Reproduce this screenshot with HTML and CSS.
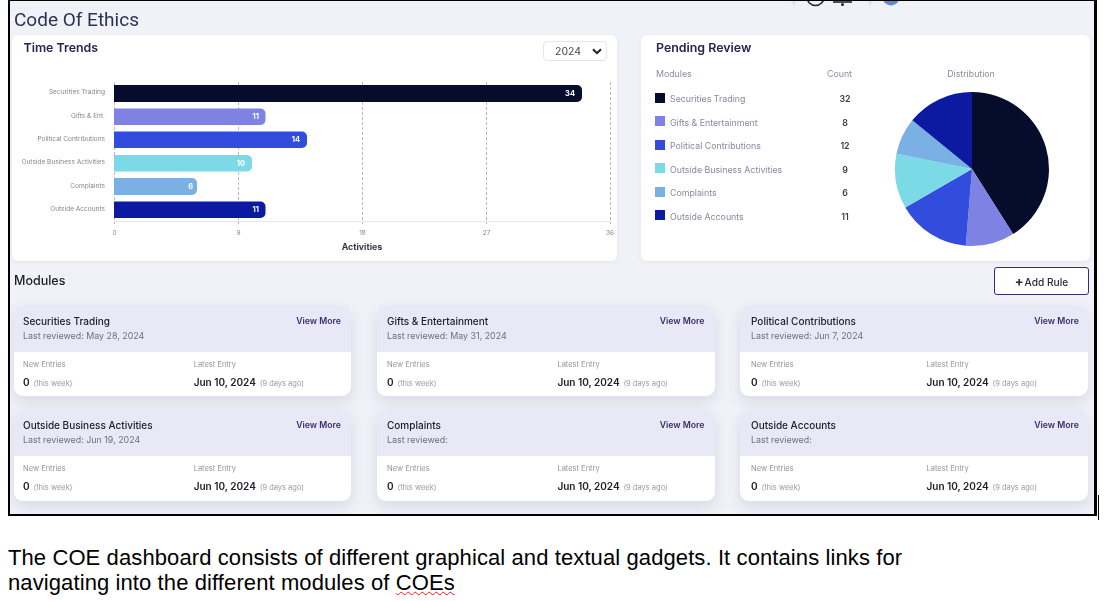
FILE: index.html
```html
<!DOCTYPE html>
<html lang="en">
<head>
    <meta charset="UTF-8">
    <title>Code Of Ethics</title>
    <link rel="stylesheet" href="styles.css">
</head>
<body>
    <div class="frame">
        <div class="screen">
            <div class="topbar">
                <svg width="110" height="6" viewBox="0 0 110 6">
                    <path d="M4 0V4M80 0V4" stroke="#c9c9d2" stroke-width="1"/>
                    <circle cx="25.5" cy="-4" r="8.5" fill="none" stroke="#23232b" stroke-width="1.6"/>
                    <path d="M43 1H62" stroke="#23232b" stroke-width="1.6"/>
                    <circle cx="52.5" cy="3.5" r="1.5" fill="#23232b"/>
                    <circle cx="101" cy="-4" r="8.5" fill="#5b8bd0"/>
                </svg>
            </div>
            <h1 class="page-title">Code Of Ethics</h1>

            <div class="top-row">
                <section class="card trends">
                    <div class="trends-head">
                        <h2 class="card-title">Time Trends</h2>
                        <div class="year-select">
                            2024
                            <svg width="10" height="7" viewBox="0 0 10 7"><path d="M1 1.2L5 5.2L9 1.2" fill="none" stroke="#1f1f2b" stroke-width="2"/></svg>
                        </div>
                    </div>
                    <svg class="bar-chart" width="605" height="186" viewBox="12 75 605 186">
                        <g class="grid-lines">
                            <path d="M114.5 82V224M238.5 82V224M362.5 82V224M486.5 82V224M610.5 82V224"/>
                        </g>
                        <path d="M114 221.5H611" stroke="#e6e6ec" stroke-width="1"/>

                        <path d="M114 85H577a5 5 0 0 1 5 5v7a5 5 0 0 1 -5 5H114Z" fill="#060c2c"/>
                        <path d="M114 108.5H260.500a5 5 0 0 1 5 5v6.500a5 5 0 0 1 -5 5H114Z" fill="#7e83e3"/>
                        <path d="M114 131.500H302a5 5 0 0 1 5 5v6.500a5 5 0 0 1 -5 5H114Z" fill="#324cdd"/>
                        <path d="M114 155H247a5 5 0 0 1 5 5v6.500a5 5 0 0 1 -5 5H114Z" fill="#7cd9e6"/>
                        <path d="M114 178H192a5 5 0 0 1 5 5v7a5 5 0 0 1 -5 5H114Z" fill="#7ab0e3"/>
                        <path d="M114 201.500H260.500a5 5 0 0 1 5 5v6.500a5 5 0 0 1 -5 5H114Z" fill="#0b1aa0"/>

                        <g class="bar-labels">
                            <text x="105" y="94">Securities Trading</text>
                            <text x="105" y="118">Gifts &amp; Ent.</text>
                            <text x="105" y="141">Political Contributions</text>
                            <text x="105" y="164">Outside Business Activities</text>
                            <text x="105" y="188">Complaints</text>
                            <text x="105" y="211">Outside Accounts</text>
                        </g>
                        <g class="bar-values">
                            <text x="575" y="96">34</text>
                            <text x="259" y="119">11</text>
                            <text x="300" y="142">14</text>
                            <text x="245" y="165.500">10</text>
                            <text x="193" y="189">6</text>
                            <text x="259" y="212">11</text>
                        </g>
                        <g class="axis-labels">
                            <text x="114.500" y="235">0</text>
                            <text x="238.500" y="235">9</text>
                            <text x="362.500" y="235">18</text>
                            <text x="486.500" y="235">27</text>
                            <text x="610" y="235">36</text>
                        </g>
                        <text class="axis-title" x="362" y="250">Activities</text>
                    </svg>
                </section>

                <section class="card pending">
                    <div class="pending-list">
                        <h2 class="card-title">Pending Review</h2>
                        <div class="pending-cols"><span>Modules</span><span>Count</span></div>
                        <div class="pending-row"><i class="swatch c1"></i><span class="pending-name">Securities Trading</span><b>32</b></div>
                        <div class="pending-row"><i class="swatch c2"></i><span class="pending-name">Gifts &amp; Entertainment</span><b>8</b></div>
                        <div class="pending-row"><i class="swatch c3"></i><span class="pending-name">Political Contributions</span><b>12</b></div>
                        <div class="pending-row"><i class="swatch c4"></i><span class="pending-name">Outside Business Activities</span><b>9</b></div>
                        <div class="pending-row"><i class="swatch c5"></i><span class="pending-name">Complaints</span><b>6</b></div>
                        <div class="pending-row"><i class="swatch c6"></i><span class="pending-name">Outside Accounts</span><b>11</b></div>
                    </div>
                    <div class="pending-pie">
                        <div class="pie-label">Distribution</div>
                        <svg width="156" height="156" viewBox="-78 -78 156 156">
                            <path d="M0 0V-77A77 77 0 0 1 41.100 65.100Z" fill="#060c2c"/>
                            <path d="M0 0L41.100 65.100A77 77 0 0 1 -6.200 76.800Z" fill="#7e83e3"/>
                            <path d="M0 0L-6.200 76.800A77 77 0 0 1 -66.700 38.500Z" fill="#324cdd"/>
                            <path d="M0 0L-66.700 38.500A77 77 0 0 1 -75.500 -15.300Z" fill="#7cd9e6"/>
                            <path d="M0 0L-75.500 -15.300A77 77 0 0 1 -59.700 -48.700Z" fill="#7ab0e3"/>
                            <path d="M0 0L-59.700 -48.700A77 77 0 0 1 0 -77Z" fill="#0b1aa0"/>
                        </svg>
                    </div>
                </section>
            </div>

            <div class="modules-head">
                <h2 class="modules-title">Modules</h2>
                <button class="add-rule"><span class="plus">+</span>Add Rule</button>
            </div>

            <div class="modules">
                <div class="module">
                    <div class="module-head">
                        <div><div class="module-name">Securities Trading</div><div class="module-date">Last reviewed: May 28, 2024</div></div>
                        <a class="view-more">View More</a>
                    </div>
                    <div class="module-body">
                        <div class="col-new"><div class="stat-label">New Entries</div><div class="stat"><b>0</b> <small>(this week)</small></div></div>
                        <div><div class="stat-label">Latest Entry</div><div class="stat"><b>Jun 10, 2024</b> <small>(9 days ago)</small></div></div>
                    </div>
                </div>
                <div class="module">
                    <div class="module-head">
                        <div><div class="module-name">Gifts &amp; Entertainment</div><div class="module-date">Last reviewed: May 31, 2024</div></div>
                        <a class="view-more">View More</a>
                    </div>
                    <div class="module-body">
                        <div class="col-new"><div class="stat-label">New Entries</div><div class="stat"><b>0</b> <small>(this week)</small></div></div>
                        <div><div class="stat-label">Latest Entry</div><div class="stat"><b>Jun 10, 2024</b> <small>(9 days ago)</small></div></div>
                    </div>
                </div>
                <div class="module">
                    <div class="module-head">
                        <div><div class="module-name">Political Contributions</div><div class="module-date">Last reviewed: Jun 7, 2024</div></div>
                        <a class="view-more">View More</a>
                    </div>
                    <div class="module-body">
                        <div class="col-new"><div class="stat-label">New Entries</div><div class="stat"><b>0</b> <small>(this week)</small></div></div>
                        <div><div class="stat-label">Latest Entry</div><div class="stat"><b>Jun 10, 2024</b> <small>(9 days ago)</small></div></div>
                    </div>
                </div>
                <div class="module">
                    <div class="module-head">
                        <div><div class="module-name">Outside Business Activities</div><div class="module-date">Last reviewed: Jun 19, 2024</div></div>
                        <a class="view-more">View More</a>
                    </div>
                    <div class="module-body">
                        <div class="col-new"><div class="stat-label">New Entries</div><div class="stat"><b>0</b> <small>(this week)</small></div></div>
                        <div><div class="stat-label">Latest Entry</div><div class="stat"><b>Jun 10, 2024</b> <small>(9 days ago)</small></div></div>
                    </div>
                </div>
                <div class="module">
                    <div class="module-head">
                        <div><div class="module-name">Complaints</div><div class="module-date">Last reviewed:</div></div>
                        <a class="view-more">View More</a>
                    </div>
                    <div class="module-body">
                        <div class="col-new"><div class="stat-label">New Entries</div><div class="stat"><b>0</b> <small>(this week)</small></div></div>
                        <div><div class="stat-label">Latest Entry</div><div class="stat"><b>Jun 10, 2024</b> <small>(9 days ago)</small></div></div>
                    </div>
                </div>
                <div class="module">
                    <div class="module-head">
                        <div><div class="module-name">Outside Accounts</div><div class="module-date">Last reviewed:</div></div>
                        <a class="view-more">View More</a>
                    </div>
                    <div class="module-body">
                        <div class="col-new"><div class="stat-label">New Entries</div><div class="stat"><b>0</b> <small>(this week)</small></div></div>
                        <div><div class="stat-label">Latest Entry</div><div class="stat"><b>Jun 10, 2024</b> <small>(9 days ago)</small></div></div>
                    </div>
                </div>
            </div>
        </div>
        <div class="frame-tick"></div>
    </div>

    <p class="caption">The COE dashboard consists of different graphical and textual gadgets. It contains links for<br>navigating into the different modules of <span class="misspelt">COEs</span></p>
</body>
</html>
```

FILE: styles.css
```css
* {
    box-sizing: border-box;
}
html, body {
    margin: 0;
    padding: 0;
    background-color: #fff;
    overflow: hidden;
}
body {
    height: 601px;
    font-family: Inter, "Noto Sans", sans-serif;
    color: #2a2a38;
}
.frame {
    position: relative;
    width: 1089px;
    height: 516px;
    margin-left: 8px;
    background-color: #f0f2f8;
    border: 2px solid #000;
    border-top-width: 1px;
    border-right-width: 3px;
}
.screen {
    height: 100%;
    overflow: hidden;
    filter: blur(0.5px);
}
.frame-tick {
    position: absolute;
    right: -5px;
    top: 494px;
    width: 1px;
    height: 25px;
    background-color: #000;
}
.topbar {
    display: flex;
    justify-content: flex-end;
    height: 6px;
    padding-right: 194px;
    overflow: hidden;
}
.topbar svg {
    display: block;
}
.page-title {
    margin: 0 0 0 4px;
    height: 28px;
    font-family: Roboto, sans-serif;
    font-size: 19px;
    font-weight: 400;
    line-height: 25px;
    color: #2b3350;
}
.top-row {
    display: flex;
    gap: 24px;
    margin-left: 2px;
}
.card {
    height: 226px;
    background-color: #fff;
    border-radius: 6px;
    box-shadow: 0 1px 4px rgba(60, 60, 110, 0.07);
}
.card-title {
    margin: 0;
    font-size: 12.400px;
    font-weight: 600;
    line-height: 16px;
    color: #2a2250;
}
.trends {
    width: 605px;
}
.trends-head {
    display: flex;
    justify-content: space-between;
    align-items: flex-start;
    height: 40px;
    padding: 5px 10px 0 11.500px;
}
.year-select {
    display: flex;
    align-items: center;
    justify-content: space-between;
    width: 64px;
    height: 20px;
    margin-top: 1px;
    padding: 0 4px 0 11px;
    border: 1px solid #e4e4f2;
    border-radius: 4px;
    font-size: 10.500px;
    color: #444;
}
.bar-chart {
    display: block;
}
.grid-lines path {
    fill: none;
    stroke: #b9b9c0;
    stroke-width: 1;
    stroke-dasharray: 3 2;
}
.bar-labels text {
    font-size: 6.550px;
    fill: #85858f;
    text-anchor: end;
}
.bar-values text {
    font-size: 7.500px;
    font-weight: 700;
    fill: #fff;
    text-anchor: end;
}
.axis-labels text {
    font-size: 6.500px;
    fill: #85858f;
    text-anchor: middle;
}
.axis-title {
    font-size: 8.800px;
    font-weight: 700;
    fill: #3a3a48;
    text-anchor: middle;
}
.pending {
    display: flex;
    width: 449px;
    padding: 5px 0 0 15px;
}
.pending-list {
    width: 197px;
}
.pending-cols {
    display: flex;
    justify-content: space-between;
    margin-top: 11px;
    margin-bottom: 6px;
    padding-right: 1px;
    font-size: 8.800px;
    line-height: 14px;
    color: #8f8a9c;
}
.pending-row {
    display: flex;
    align-items: center;
    height: 23.500px;
    margin-left: -1px;
    font-size: 8.800px;
    color: #8a87a0;
}
.pending-name {
    flex: 1;
    margin-left: 5px;
}
.pending-row b {
    width: 14px;
    margin-right: 1px;
    text-align: center;
    font-weight: 600;
    color: #3a3a48;
}
.swatch {
    display: block;
    width: 10px;
    height: 10px;
    margin-top: -2px;
}
.c1 { background-color: #060c2c; }
.c2 { background-color: #7e83e3; }
.c3 { background-color: #324cdd; }
.c4 { background-color: #7cd9e6; }
.c5 { background-color: #7ab0e3; }
.c6 { background-color: #0b1aa0; }
.pending-pie {
    width: 156px;
    margin-left: 41px;
    padding-top: 27px;
}
.pie-label {
    margin-bottom: 10px;
    padding-right: 2px;
    font-size: 8.800px;
    line-height: 14px;
    text-align: center;
    color: #8f8a9c;
}
.pending-pie svg {
    display: block;
}
.modules-head {
    display: flex;
    justify-content: space-between;
    align-items: center;
    height: 28px;
    margin-top: 6px;
    margin-left: 4px;
    margin-right: 5px;
}
.modules-title {
    margin: 0 0 2px;
    font-size: 12.500px;
    font-weight: 500;
    color: #20202c;
}
.add-rule {
    width: 95px;
    height: 28px;
    padding: 0;
    background-color: #fff;
    border: 1px solid #3c2a78;
    border-radius: 3px;
    font-family: inherit;
    font-size: 10.200px;
    font-weight: 500;
    color: #2a2a3c;
}
.plus {
    margin-right: 1px;
    font-weight: 700;
    font-size: 13px;
}
.modules {
    display: grid;
    grid-template-columns: 337px 338px 348px;
    grid-template-rows: 91px 92px;
    column-gap: 25.500px;
    row-gap: 13px;
    margin-top: 10px;
    margin-left: 4px;
}
.module {
    background-color: #fff;
    border-radius: 9px;
    overflow: hidden;
    box-shadow: 0 6px 14px rgba(60, 60, 110, 0.13);
}
.module-head {
    display: flex;
    justify-content: space-between;
    height: 47px;
    padding: 9px 10px 0 9px;
    background-color: #e9e8f6;
}
.module:nth-child(3n+2) .module-head,
.module:nth-child(3n+2) .module-body {
    padding-left: 10.500px;
}
.module:nth-child(3n) .module-head,
.module:nth-child(3n) .module-body {
    padding-left: 11px;
}
.module:nth-child(3n) .module-head {
    padding-right: 9px;
}
.module-name {
    font-size: 10px;
    font-weight: 500;
    line-height: 14px;
    color: #20202c;
}
.module-date {
    margin-top: 2px;
    font-size: 8.900px;
    line-height: 12px;
    color: #6f6f7c;
}
.view-more {
    font-size: 8.700px;
    font-weight: 600;
    line-height: 14px;
    color: #3a2f68;
}
.module-body {
    display: flex;
    padding: 8px 9px 0;
}
.col-new {
    width: 53.500%;
}
.stat-label {
    font-size: 7.500px;
    line-height: 10px;
    color: #94949f;
}
.stat {
    margin-top: 6px;
    font-size: 10px;
    line-height: 13px;
}
.stat b {
    font-weight: 600;
    color: #20202c;
}
.stat small {
    margin-left: 1px;
    font-size: 7.500px;
    color: #9a9aa4;
}
.caption {
    margin: 28.500px 0 0 8px;
    font-family: "Liberation Sans", Arial, sans-serif;
    font-size: 22px;
    letter-spacing: 0.100px;
    line-height: 25px;
    color: #000;
}
.misspelt {
    text-decoration: underline wavy #d22;
    text-decoration-thickness: 1px;
}
```
